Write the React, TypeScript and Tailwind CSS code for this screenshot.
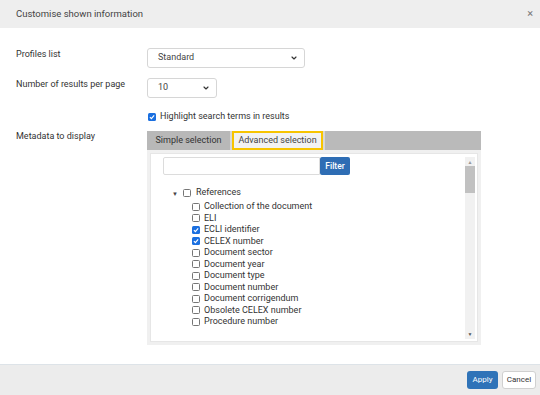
import React from 'react'
import { ChevronDown } from 'lucide-react'

const items = [
    { label: 'Collection of the document', checked: false },
    { label: 'ELI', checked: false },
    { label: 'ECLI identifier', checked: true },
    { label: 'CELEX number', checked: true },
    { label: 'Document sector', checked: false },
    { label: 'Document year', checked: false },
    { label: 'Document type', checked: false },
    { label: 'Document number', checked: false },
    { label: 'Document corrigendum', checked: false },
    { label: 'Obsolete CELEX number', checked: false },
    { label: 'Procedure number', checked: false },
]

function Box({ checked }: { checked?: boolean }) {
    if (checked) {
        return (
            <span className="flex items-center justify-center w-[8px] h-[8px] rounded-[1.5px] bg-[#1a6fe0] shrink-0">
                <svg width="6" height="6" viewBox="0 0 10 10">
                    <path d="M1.5 5.2 L4 7.6 L8.6 2.4" fill="none" stroke="white" strokeWidth="2" />
                </svg>
            </span>
        )
    }
    return <span className="w-[8px] h-[8px] rounded-[1.5px] border border-[#767676] bg-white shrink-0" />
}

function Select({ value, width }: { value: string; width: string }) {
    return (
        <div className={`flex items-center justify-between h-[20px] ${width} border border-[#d6d6d6] rounded-[3px] bg-white pl-[10px] pr-[6px] text-[#444]`}>
            <span>{value}</span>
            <ChevronDown size={8} strokeWidth={3.5} color="#333" />
        </div>
    )
}

export default function App() {
    return (
        <div
            className="w-[540px] h-[395px] flex flex-col bg-white text-[9px] text-[#333] overflow-hidden"
            style={{ fontFamily: 'Roboto, "Liberation Sans", sans-serif' }}
        >
            {/* header */}
            <div className="h-[28px] shrink-0 flex items-center justify-between pl-[16px] pr-[7px] bg-[#eeeeee] text-[9.5px] text-[#444]">
                <span>Customise shown information</span>
                <span className="text-[11px] text-[#777]">×</span>
            </div>

            {/* body */}
            <div className="flex-1 flex flex-col pt-[20px] pl-[16px]">
                <div className="flex h-[20px]">
                    <div className="w-[131px]">Profiles list</div>
                    <Select value="Standard" width="w-[158px]" />
                </div>
                <div className="flex h-[20px] mt-[10px]">
                    <div className="w-[131px]">Number of results per page</div>
                    <Select value="10" width="w-[70px]" />
                </div>
                <div className="flex items-center mt-[13px] h-[12px]">
                    <div className="w-[132px]" />
                    <Box checked />
                    <span className="ml-[4px]">Highlight search terms in results</span>
                </div>
                <div className="flex mt-[7px]">
                    <div className="w-[131px]">Metadata to display</div>
                    <div className="w-[334px] flex flex-col mt-[1px]">
                        {/* tabs */}
                        <div className="flex h-[19px] bg-[#bababa]">
                            <div className="w-[83px] flex items-center justify-center bg-[#b8b8b8] text-[#333]">Simple selection</div>
                            <div className="w-[2px] bg-[#d8d8d8]" />
                            <div className="w-[91px] flex items-center justify-center bg-[#f2f2f2] border-2 border-[#f7c400] text-[#444]">Advanced selection</div>
                            <div className="w-[2px] bg-[#d8d8d8]" />
                        </div>
                        {/* panel */}
                        <div className="h-[195px] bg-[#f0f0f0] p-[3px] flex">
                            <div className="flex-1 flex bg-white border border-[#e6e6e6] pl-[12px] pr-[2px] pt-[3px] pb-[2px]">
                                <div className="flex-1 flex flex-col">
                                    <div className="flex h-[18px]">
                                        <div className="w-[157px] border border-[#dcdcdc] rounded-l-[2px] bg-white" />
                                        <div className="w-[30px] flex items-center justify-center bg-[#2e6db4] text-white rounded-[2px] text-[8.5px] font-medium">Filter</div>
                                    </div>
                                    <div className="flex items-center mt-[12px] pl-[9px] h-[12px]">
                                        <span className="text-[6px] text-[#444] w-[11px]">▼</span>
                                        <Box />
                                        <span className="ml-[5px]">References</span>
                                    </div>
                                    <div className="flex flex-col mt-[2px] pl-[29px]">
                                        {items.map((it) => (
                                            <div key={it.label} className="flex items-center h-[11.5px]">
                                                <Box checked={it.checked} />
                                                <span className="ml-[4px]">{it.label}</span>
                                            </div>
                                        ))}
                                    </div>
                                </div>
                                {/* scrollbar */}
                                <div className="w-[10px] flex flex-col items-center bg-[#f1f1f1]">
                                    <span className="text-[5px] text-[#999] leading-[8px] mt-[1px]">▲</span>
                                    <div className="w-[10px] h-[27px] bg-[#c1c1c1]" />
                                    <div className="flex-1" />
                                    <span className="text-[5px] text-[#555] leading-[8px] mb-[1px]">▼</span>
                                </div>
                            </div>
                        </div>
                    </div>
                </div>
            </div>

            {/* footer */}
            <div className="h-[31px] shrink-0 flex items-center justify-end gap-[4px] pr-[4px] bg-[#ececec] border-t border-[#dde3e8]">
                <div className="h-[18px] w-[31px] flex items-center justify-center bg-[#2f73b8] text-white rounded-[3px] text-[8px]">Apply</div>
                <div className="h-[18px] w-[34px] flex items-center justify-center bg-white border border-[#d0d0d0] text-[#333] rounded-[3px] text-[8px]">Cancel</div>
            </div>
        </div>
    )
}
